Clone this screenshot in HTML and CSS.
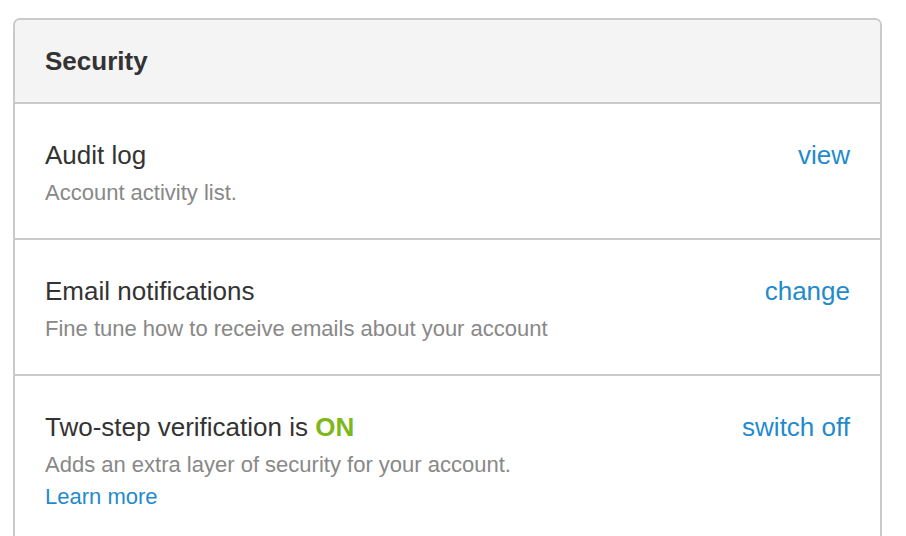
FILE: index.html
```html
<!DOCTYPE html>
<html lang="en">
<head>
  <meta charset="UTF-8" />
  <meta name="viewport" content="width=device-width, initial-scale=1.0" />
  <title>Security</title>
  <link rel="stylesheet" href="styles.css">
</head>
<body>
  <div class="panel">
    <div class="panel-header">Security</div>

    <div class="setting">
      <div class="setting-info">
        <div class="setting-title">Audit log</div>
        <div class="setting-desc">Account activity list.</div>
      </div>
      <a class="setting-action" href="#">view</a>
    </div>

    <div class="setting">
      <div class="setting-info">
        <div class="setting-title">Email notifications</div>
        <div class="setting-desc">Fine tune how to receive emails about your account</div>
      </div>
      <a class="setting-action" href="#">change</a>
    </div>

    <div class="setting">
      <div class="setting-info">
        <div class="setting-title">Two-step verification is <span class="status-on">ON</span></div>
        <div class="setting-desc">Adds an extra layer of security for your account.</div>
        <a class="learn-more" href="#">Learn more</a>
      </div>
      <a class="setting-action" href="#">switch off</a>
    </div>
  </div>
</body>
</html>
```

FILE: styles.css
```css
body {
  font-family: "Liberation Sans", Arial, sans-serif;
  background-color: #fff;
  color: #333;
  margin: 0;
}
a {
  color: #1f8bcd;
  text-decoration: none;
}
.panel {
  margin: 18px 24px 0 13px;
  border: 2px solid #cacaca;
  border-bottom: none;
  border-radius: 7px 7px 0 0;
  overflow: hidden;
}
.panel-header {
  background-color: #f4f4f4;
  border-bottom: 2px solid #cacaca;
  padding: 26px 30px;
  font-size: 26px;
  line-height: 30px;
  font-weight: bold;
  color: #333;
}
.setting {
  display: flex;
  justify-content: space-between;
  align-items: flex-start;
  padding: 36px 30px 30px;
  border-bottom: 2px solid #cacaca;
}
.setting:last-child {
  border-bottom: none;
}
.setting-title {
  font-size: 26px;
  line-height: 30px;
  color: #333;
}
.setting-desc {
  margin-top: 7px;
  font-size: 22px;
  line-height: 31px;
  color: #888;
}
.learn-more {
  display: block;
  margin-top: 1px;
  font-size: 22px;
  line-height: 31px;
}
.setting-action {
  font-size: 26px;
  line-height: 30px;
}
.status-on {
  color: #7db81b;
  font-weight: bold;
}
```
